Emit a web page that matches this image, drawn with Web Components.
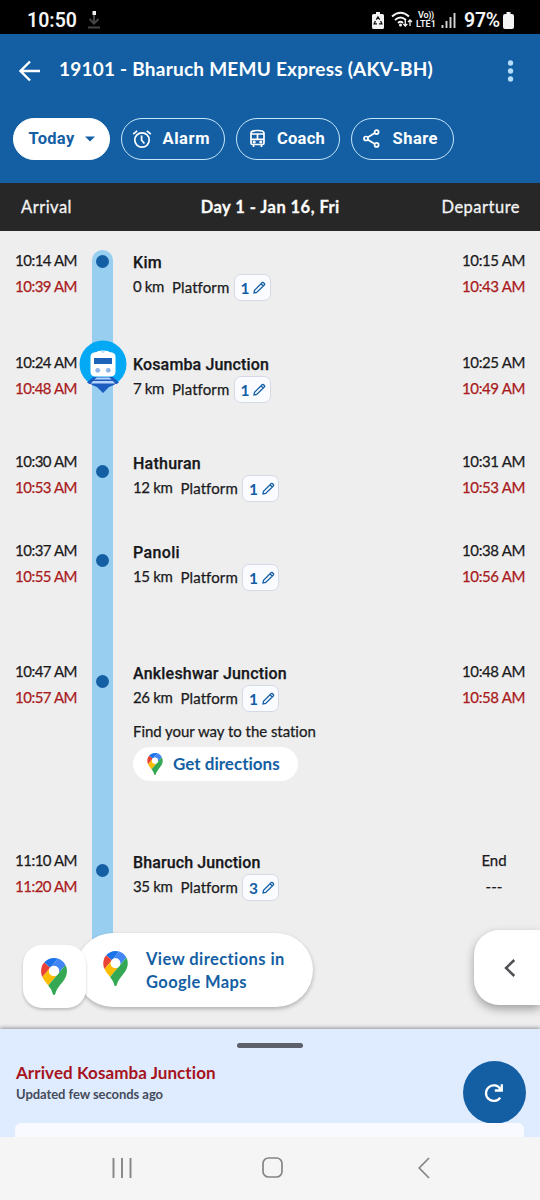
<!DOCTYPE html>
<html lang="en">
<head>
<meta charset="utf-8">
<title>Train status</title>
<style>
html,body{margin:0;padding:0}
body{width:540px;height:1200px;overflow:hidden;font-family:Lato,"Open Sans",sans-serif;color:#1b1b1d;background:#eee}
</style>
</head>
<body>
<train-app></train-app>
<script>
const define=(name,html,setup)=>customElements.define(name,class extends HTMLElement{
  connectedCallback(){
    if(this.shadowRoot)return;
    const root=this.attachShadow({mode:'open'});
    const t=document.createElement('template');
    t.innerHTML=typeof html==='function'?html(this):html;
    root.append(t.content.cloneNode(true));
    if(setup)setup(this,root);
  }
});

/* Single-line label spread by letter spacing to fill the width in its "w" attribute */
define('fit-text','<style>:host{display:inline-block;white-space:nowrap}span{display:inline-block}</style><span><slot></slot></span>',(el,root)=>{
  const s=root.querySelector('span'),w=+el.getAttribute('w'),n=el.textContent.length;
  const natural=s.getBoundingClientRect().width;
  s.style.letterSpacing=((w-natural)/n).toFixed(3)+'px';
  el.style.width=w+'px';
});

define('map-pin',`<style>:host{display:block;flex:none}svg{display:block;width:100%;height:100%}</style>
<svg viewBox="0 0 92.3 132.3"><path fill="#1a73e8" d="M60.2 2.2C55.8.8 51 0 46.1 0 32 0 19.3 6.4 10.8 16.5l21.8 18.3z"/><path fill="#ea4335" d="M10.8 16.5C4.1 24.5 0 34.9 0 46.1c0 8.7 1.7 15.7 4.6 22l28-33.3z"/><path fill="#4285f4" d="M46.2 28.5c9.8 0 17.7 7.9 17.7 17.7 0 4.3-1.6 8.3-4.2 11.4 0 0 13.9-16.6 27.5-32.7-5.6-10.8-15.3-19-27-22.7L32.6 34.8c3.3-3.8 8.1-6.3 13.6-6.3"/><path fill="#fbbc04" d="M46.2 63.8c-9.8 0-17.7-7.9-17.7-17.7 0-4.3 1.5-8.3 4.1-11.3l-28 33.3c4.8 10.6 12.8 19.2 21 29.9l34.1-40.5c-3.3 3.9-8.1 6.3-13.5 6.3"/><path fill="#34a853" d="M59.1 109.2c15.4-24.1 33.3-35 33.3-63 0-7.7-1.9-14.9-5.2-21.3L25.6 98c2.6 3.4 5.3 7.3 7.9 11.3 9.4 14.5 6.8 23.1 12.8 23.1s3.4-8.7 12.8-23.2"/><circle cx="46.2" cy="46.2" r="18.500" fill="#fff"/></svg>`);

define('status-bar',`<style>
:host{display:flex;height:34px;background:#000;color:#f4f4f4;align-items:center;padding:6px 26px 0 27px;box-sizing:border-box;font-family:Roboto,sans-serif}
.clock{font-size:19.5px;font-weight:600}svg{display:block;flex:none}.dl{margin-left:10px}.sp{flex:1}
.lte{margin-left:3px;display:flex;flex-direction:column;font-size:9px;line-height:9.500px;font-weight:600;align-items:center}
.pct{font-size:19.5px;font-weight:600;margin-left:8px}
</style>
<fit-text class="clock" w="50">10:50</fit-text>
<svg class="dl" width="14" height="18" viewBox="0 0 14 18"><path d="M7 3v9M2.500 8l4.500 4.500L11.500 8M1 16.500h12" fill="none" stroke="#444" stroke-width="2"/><rect x="5.500" y="0" width="3.500" height="4" fill="#eee"/></svg>
<span class="sp"></span>
<svg width="12" height="17" viewBox="0 0 12 17"><path d="M4 0h4v2h2.500Q12 2 12 3.500v12q0 1.500-1.500 1.500h-9Q0 17 0 15.500v-12Q0 2 1.500 2H4z" fill="#f2f2f2"/><path d="M4.300 7.600L6 5l1.700 2.600M8.600 9l1.300 2.800H7M5 11.800H2.100L3.500 9" fill="none" stroke="#111" stroke-width="1.300"/></svg>
<svg style="margin-left:7px" width="22" height="18" viewBox="0 0 22 18"><path d="M1 5.500Q9.500-2 18 5.500M4 9q5.500-5 11 0M7 12q2.500-2.300 5 0" fill="none" stroke="#f2f2f2" stroke-width="1.900"/><circle cx="9.500" cy="14" r="1.500" fill="#f2f2f2"/><path d="M14.300 9v6m-2-2l2 2 2-2M19 15V9m-2 2l2-2 2 2" fill="none" stroke="#f2f2f2" stroke-width="1.300"/></svg>
<div class="lte"><fit-text w="16">Vo))</fit-text><fit-text w="20">LTE1</fit-text></div>
<svg style="margin-left:5px" width="15" height="16" viewBox="0 0 15 16"><path d="M1.500 16v-3M5.500 16v-7M9.500 16V5M13.500 16V1" stroke="#d5d5d5" stroke-width="1.900"/></svg>
<fit-text class="pct" w="36">97%</fit-text>
<svg style="margin-left:3px" width="11" height="17" viewBox="0 0 11 17"><path d="M3.500 0h4v2H9q2 0 2 2v11q0 2-2 2H2q-2 0-2-2V4q0-2 2-2h1.500z" fill="#f4f4f4"/></svg>`);

define('action-chip',`<style>
:host{display:flex;height:42px;box-sizing:border-box;border:1.500px solid #c4e6fb;border-radius:21px;align-items:center;color:#fff;font:700 16.500px Roboto,sans-serif}
:host([filled]){background:#fff;border-color:#fff;color:#1460a5}
</style><slot></slot>`);

define('app-header',`<style>
:host{display:flex;flex-direction:column;height:149px;background:#145fa4;color:#fff}
.bar{display:flex;height:73px;align-items:center;padding:0 25px 0 19px}
h1{margin:-3px 0 0 18px;font-size:19px;font-weight:700;line-height:24px;flex:1}
.chips{display:flex;gap:10.500px;padding:10.500px 0 0 13px}
svg{display:block;flex:none}
</style>
<div class="bar"><svg width="22" height="22" viewBox="0 0 22 22"><path d="M21 11H2M11 1.500L1.500 11l9.500 9.500" fill="none" stroke="#fff" stroke-width="2.400"/></svg>
<h1><fit-text w="374">19101 - Bharuch MEMU Express (AKV-BH)</fit-text></h1>
<svg width="9" height="22" viewBox="0 0 9 22"><g fill="#b3ddfa"><circle cx="4.500" cy="3" r="2.700"/><circle cx="4.500" cy="11" r="2.700"/><circle cx="4.500" cy="19" r="2.700"/></g></svg></div>
<div class="chips">
<action-chip filled style="width:97px"><fit-text w="46" style="margin-left:14.500px">Today</fit-text><svg style="margin-left:10px" width="10" height="6"><path d="M0 .5h10l-5 5z" fill="#1460a5"/></svg></action-chip>
<action-chip style="width:104.500px"><svg style="margin-left:10px" width="20" height="20" viewBox="0 0 20 20" fill="none" stroke="#fff" stroke-width="1.700"><circle cx="10" cy="11" r="7.200"/><path d="M1.200 5.200l4-3.400M18.800 5.200l-4-3.400M9.600 6.500v4.800l2.800 3.200"/></svg><fit-text w="47.500" style="margin-left:11px">Alarm</fit-text></action-chip>
<action-chip style="width:104.500px"><svg style="margin-left:12px" width="17" height="19" viewBox="0 0 17 19" fill="none" stroke="#fff" stroke-width="1.700"><path d="M2 4q0-2.500 6.500-2.500T15 4v10q0 1.500-1.500 1.500h-10Q2 15.500 2 14zM2 5h13M2 10.300h13M8.500 5v5M4.500 15.500V18M12.500 15.500V18"/><circle cx="5.200" cy="13" r=".7"/><circle cx="11.800" cy="13" r=".7"/></svg><fit-text w="48" style="margin-left:11.500px">Coach</fit-text></action-chip>
<action-chip style="width:103px"><svg style="margin-left:11px" width="17" height="19" viewBox="0 0 17 19" fill="none" stroke="#fff" stroke-width="1.700"><path d="M4.500 8.500l7.300-4.400M4.500 10.500l7.300 4.400"/><circle cx="3" cy="9.500" r="2"/><circle cx="13.600" cy="3.100" r="2"/><circle cx="13.600" cy="15.900" r="2"/></svg><fit-text w="45.500" style="margin-left:13px">Share</fit-text></action-chip>
</div>`);

define('column-bar',`<style>
:host{display:flex;height:48px;background:#272727;color:#f3f3f3;align-items:center;justify-content:space-between;padding:0 20px 1px 21px;box-sizing:border-box;font-size:16.500px;-webkit-text-stroke:.3px #f3f3f3}
.d{font-weight:700;color:#fff}
</style><fit-text w="51">Arrival</fit-text><fit-text class="d" w="139" style="margin-left:27px">Day 1 - Jan 16, Fri</fit-text><fit-text w="78.500">Departure</fit-text>`);

define('train-marker',`<style>:host{display:block;width:48px;height:54px}</style>
<svg width="48" height="54" viewBox="0 0 48 54"><circle cx="24" cy="24" r="23.500" fill="#03a9f4"/><path d="M14.500 37h19L39 42q-4 3.500-9 5L24 53l-6-6q-5-1.500-9-5z" fill="#1a5cc0"/><path d="M15.800 37.500h16.400l1.300 2h-19zM13.500 41h21l2 2.600h-25z" fill="#b7d4f7"/><path d="M14.500 37l-6.500 5.500 2.800 1.800L18 37zM33.500 37l6.500 5.500-2.800 1.800L30 37z" fill="#1a5cc0"/><path d="M18 12q0-1.500 6-1.500t6 1.500l2 .3q4.500.7 4.500 4.500V31.500q0 5-5 5h-15q-5 0-5-5V16.800q0-3.800 4.500-4.500z" fill="#fff"/><path d="M22 11.500h4l-1 1h-2z" fill="#8abdf0"/><rect x="15" y="18" width="18" height="6" fill="#1e63b8"/><circle cx="18.700" cy="30.300" r="2.400" fill="#8eb4ec"/><circle cx="29.300" cy="30.300" r="2.400" fill="#8eb4ec"/></svg>`);

define('platform-chip',`<style>
:host{display:flex;width:37px;height:27px;box-sizing:border-box;border:1.500px solid #d6d9e6;border-radius:7px;background:#fafbff;align-items:center;padding-left:6px;color:#145fa4;font-size:15.500px;font-weight:700;gap:3.500px}
svg{display:block}span{width:9px}
</style><span><slot></slot></span><svg width="13" height="13" viewBox="0 0 13 13"><path d="M1 12l.5-2.700L9.300 1.500q.5-.4 1 0l1.200 1.200q.4.500 0 1L3.700 11.500zM8 2.800L10.200 5" fill="none" stroke="#145fa4" stroke-width="1.300"/></svg>`);

define('stop-row',el=>{
  const a=k=>el.getAttribute(k),end=el.hasAttribute('last'),first=el.hasAttribute('first');
  return `<style>
:host{display:grid;grid-template-columns:92px 21px 20px 1fr 78px;height:${a('height')}px;font-size:15px;position:relative;-webkit-text-stroke:.25px currentColor}
.times{display:flex;flex-direction:column;padding-top:16px;line-height:26.400px}
.arr{padding-left:15px}
.dep{align-items:${end?'center;padding-right:14px':'flex-end;padding-right:15px'}}
.late{color:#a91b20}
.rail{background:#98cef0;display:flex;justify-content:center;align-items:flex-start;${first?'margin-top:19px;border-radius:11px 11px 0 0;':''}${end?'height:130px;':''}}
.dot{width:13px;height:13px;border-radius:50%;background:#145fa4;margin-top:${first?5:33}px}
train-marker{margin:7px -14px 0;flex:none;position:relative}
.info{grid-column:4;padding-top:20.500px}
h2{margin:0;font:500 16px/22px Roboto,sans-serif;color:#17181b}
.meta{display:flex;align-items:center;height:27px;margin-top:.5px}
.meta fit-text{margin-top:-3px}
.meta .pf{margin:-2px 5px 0 8px}
platform-chip{-webkit-text-stroke:0;margin-left:-.5px}
</style>
<div class="times arr"><fit-text w="62">${a('arr')}</fit-text><fit-text class="late" w="62">${a('arr2')}</fit-text></div>
<div class="rail">${el.hasAttribute('current')?'<train-marker></train-marker>':'<span class="dot"></span>'}</div>
<div class="info"><h2><fit-text w="${a('nw')}">${a('name')}</fit-text></h2>
<div class="meta"><fit-text w="${a('kw')}">${a('km')} km</fit-text><fit-text class="pf" w="57">Platform</fit-text><platform-chip>${a('pf')}</platform-chip></div><slot></slot></div>
<div class="times dep">${end?'<fit-text w="25">End</fit-text><fit-text w="17">---</fit-text>':`<fit-text w="63">${a('dep')}</fit-text><fit-text class="late" w="63">${a('dep2')}</fit-text>`}</div>`;
});

define('get-directions',`<style>
:host{display:block}.t{line-height:20px;margin-top:9px;font-size:15px}
.b{display:flex;align-items:center;box-sizing:border-box;width:165px;height:34.500px;margin-top:5.500px;padding-left:14px;border-radius:18px;background:#fff;color:#145fa4;font-size:17px;font-weight:700;gap:10px;-webkit-text-stroke:0}
map-pin{width:16px;height:22px}
</style><div class="t"><fit-text w="183">Find your way to the station</fit-text></div><div class="b"><map-pin></map-pin><fit-text w="107">Get directions</fit-text></div>`);

define('floating-actions',`<style>
:host{display:block}
.pill,.card,.tab{position:absolute;background:#fff;display:flex;align-items:center;box-sizing:border-box;box-shadow:0 2px 4px #0004}
.pill{left:76px;top:702px;width:237px;height:73.500px;border-radius:37px;padding-left:27px;gap:18px;color:#145fa4;font-size:16.500px;font-weight:700;line-height:23px}
.pill map-pin{width:25px;height:35px;margin-top:-2px}
.pill div{display:flex;flex-direction:column;padding-top:2px}
.card{left:22.500px;top:714px;width:63.500px;height:63px;border-radius:19px;justify-content:center;box-shadow:0 2px 3px #0003}
.card map-pin{width:26px;height:37px}
.tab{left:474px;top:699px;width:66px;height:75px;border-radius:25px 0 0 25px;padding-left:30px;box-shadow:0 4px 10px #0005}
</style>
<div class="pill"><map-pin></map-pin><div><fit-text w="139">View directions in</fit-text><fit-text w="101">Google Maps</fit-text></div></div>
<div class="card"><map-pin></map-pin></div>
<div class="tab"><svg width="12" height="18" viewBox="0 0 12 18"><path d="M10.300 1L2 9l8.300 8" fill="none" stroke="#505258" stroke-width="2.500"/></svg></div>`);

define('bottom-sheet',`<style>
:host{display:flex;flex-direction:column;height:108px;margin-top:1px;background:#dfebfe;position:relative;box-shadow:0 -1px 4px #0006}
.grip{width:66px;height:5.500px;border-radius:3px;background:#5b606a;margin:13.500px 0 0 237px}
.row{display:flex;justify-content:space-between;padding:13px 14.500px 0 16px;height:62px}
.a{color:#a6131d;font-size:17px;font-weight:700;line-height:24px}
.u{color:#454c5c;font-size:13px;font-weight:700;line-height:18px}
.col{display:flex;flex-direction:column}
.r{width:63px;height:63px;border-radius:50%;background:#145fa4;display:grid;place-items:center}
.next{height:14px;margin:0 16px 0 15px;background:#f9faff;border-radius:6px 6px 0 0;position:relative}
</style>
<div class="grip"></div><div class="row"><div class="col"><fit-text class="a" w="200">Arrived Kosamba Junction</fit-text><fit-text class="u" w="147">Updated few seconds ago</fit-text></div>
<div class="r"><svg width="20" height="20" viewBox="0 0 20 20"><path d="M16.200 14.600A7.800 7.800 0 1 1 16.500 6.200M17.800 1.200v6.300h-7" fill="none" stroke="#fff" stroke-width="2.300"/></svg></div></div>
<div class="next"></div>`);

define('nav-bar',`<style>:host{display:flex;height:63px;background:#f5f5f5;align-items:center;padding:0 0 2px 112px;box-sizing:border-box;position:relative}svg{display:block}</style>
<svg width="20" height="20"><path d="M1.500 0v20M10 0v20M18.500 0v20" stroke="#858585" stroke-width="1.900"/></svg>
<svg style="margin-left:130px" width="21" height="21"><rect x="1" y="1" width="19" height="19" rx="5.500" fill="none" stroke="#858585" stroke-width="1.700"/></svg>
<svg style="margin-left:135px" width="12" height="22"><path d="M11 1L1.200 11l9.800 10" fill="none" stroke="#858585" stroke-width="1.700"/></svg>`);

define('train-app',`<style>
:host{display:flex;flex-direction:column;width:540px;height:1200px}
main{height:797px;flex:none;position:relative;overflow:hidden;background:#eee}
</style>
<status-bar></status-bar><app-header></app-header><column-bar></column-bar>
<main>
<stop-row first height="102" name="Kim" nw="29" km="0" kw="31" pf="1" arr="10:14 AM" arr2="10:39 AM" dep="10:15 AM" dep2="10:43 AM"></stop-row>
<stop-row current height="99" name="Kosamba Junction" nw="136" km="7" kw="31" pf="1" arr="10:24 AM" arr2="10:48 AM" dep="10:25 AM" dep2="10:49 AM"></stop-row>
<stop-row height="89" name="Hathuran" nw="68" km="12" kw="39.500" pf="1" arr="10:30 AM" arr2="10:53 AM" dep="10:31 AM" dep2="10:53 AM"></stop-row>
<stop-row height="121" name="Panoli" nw="47" km="15" kw="39.500" pf="1" arr="10:37 AM" arr2="10:55 AM" dep="10:38 AM" dep2="10:56 AM"></stop-row>
<stop-row height="189" name="Ankleshwar Junction" nw="154" km="26" kw="39.500" pf="1" arr="10:47 AM" arr2="10:57 AM" dep="10:48 AM" dep2="10:58 AM"><get-directions></get-directions></stop-row>
<stop-row last height="197" name="Bharuch Junction" nw="127.500" km="35" kw="39.500" pf="3" arr="11:10 AM" arr2="11:20 AM"></stop-row>
<floating-actions></floating-actions>
</main>
<bottom-sheet></bottom-sheet><nav-bar></nav-bar>`);
</script>
</body>
</html>
